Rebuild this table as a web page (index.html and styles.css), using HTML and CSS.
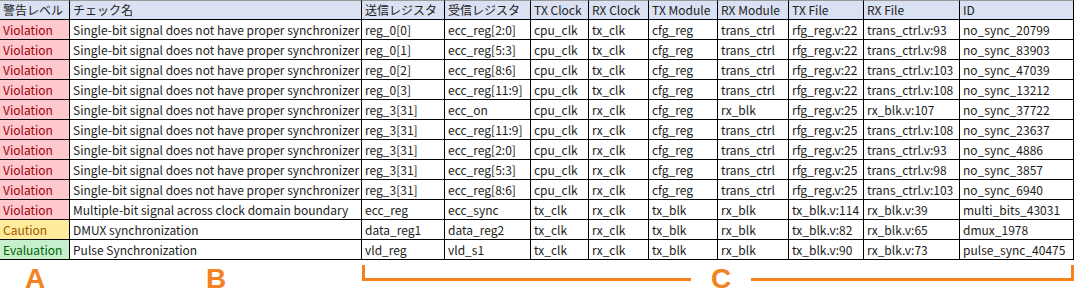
FILE: index.html
```html
<!DOCTYPE html>
<html lang="ja">
<head>
<meta charset="utf-8">
<title>CDC Report</title>
<link rel="stylesheet" href="styles.css">
</head>
<body>
<table class="report">
  <colgroup>
    <col class="c1"><col class="c2"><col class="c3"><col class="c4"><col class="c5"><col class="c6"><col class="c7"><col class="c8"><col class="c9"><col class="c10"><col class="c11">
  </colgroup>
  <thead>
    <tr><th>警告レベル</th><th>チェック名</th><th>送信レジスタ</th><th>受信レジスタ</th><th>TX Clock</th><th>RX Clock</th><th>TX Module</th><th>RX Module</th><th>TX File</th><th>RX File</th><th>ID</th></tr>
  </thead>
  <tbody>
    <tr><td class="lv violation">Violation</td><td>Single-bit signal does not have proper synchronizer</td><td>reg_0[0]</td><td>ecc_reg[2:0]</td><td>cpu_clk</td><td>tx_clk</td><td>cfg_reg</td><td>trans_ctrl</td><td>rfg_reg.v:22</td><td>trans_ctrl.v:93</td><td>no_sync_20799</td></tr>
    <tr><td class="lv violation">Violation</td><td>Single-bit signal does not have proper synchronizer</td><td>reg_0[1]</td><td>ecc_reg[5:3]</td><td>cpu_clk</td><td>tx_clk</td><td>cfg_reg</td><td>trans_ctrl</td><td>rfg_reg.v:22</td><td>trans_ctrl.v:98</td><td>no_sync_83903</td></tr>
    <tr><td class="lv violation">Violation</td><td>Single-bit signal does not have proper synchronizer</td><td>reg_0[2]</td><td>ecc_reg[8:6]</td><td>cpu_clk</td><td>tx_clk</td><td>cfg_reg</td><td>trans_ctrl</td><td>rfg_reg.v:22</td><td>trans_ctrl.v:103</td><td>no_sync_47039</td></tr>
    <tr><td class="lv violation">Violation</td><td>Single-bit signal does not have proper synchronizer</td><td>reg_0[3]</td><td>ecc_reg[11:9]</td><td>cpu_clk</td><td>tx_clk</td><td>cfg_reg</td><td>trans_ctrl</td><td>rfg_reg.v:22</td><td>trans_ctrl.v:108</td><td>no_sync_13212</td></tr>
    <tr><td class="lv violation">Violation</td><td>Single-bit signal does not have proper synchronizer</td><td>reg_3[31]</td><td>ecc_on</td><td>cpu_clk</td><td>rx_clk</td><td>cfg_reg</td><td>rx_blk</td><td>rfg_reg.v:25</td><td>rx_blk.v:107</td><td>no_sync_37722</td></tr>
    <tr><td class="lv violation">Violation</td><td>Single-bit signal does not have proper synchronizer</td><td>reg_3[31]</td><td>ecc_reg[11:9]</td><td>cpu_clk</td><td>rx_clk</td><td>cfg_reg</td><td>trans_ctrl</td><td>rfg_reg.v:25</td><td>trans_ctrl.v:108</td><td>no_sync_23637</td></tr>
    <tr><td class="lv violation">Violation</td><td>Single-bit signal does not have proper synchronizer</td><td>reg_3[31]</td><td>ecc_reg[2:0]</td><td>cpu_clk</td><td>rx_clk</td><td>cfg_reg</td><td>trans_ctrl</td><td>rfg_reg.v:25</td><td>trans_ctrl.v:93</td><td>no_sync_4886</td></tr>
    <tr><td class="lv violation">Violation</td><td>Single-bit signal does not have proper synchronizer</td><td>reg_3[31]</td><td>ecc_reg[5:3]</td><td>cpu_clk</td><td>rx_clk</td><td>cfg_reg</td><td>trans_ctrl</td><td>rfg_reg.v:25</td><td>trans_ctrl.v:98</td><td>no_sync_3857</td></tr>
    <tr><td class="lv violation">Violation</td><td>Single-bit signal does not have proper synchronizer</td><td>reg_3[31]</td><td>ecc_reg[8:6]</td><td>cpu_clk</td><td>rx_clk</td><td>cfg_reg</td><td>trans_ctrl</td><td>rfg_reg.v:25</td><td>trans_ctrl.v:103</td><td>no_sync_6940</td></tr>
    <tr><td class="lv violation">Violation</td><td>Multiple-bit signal across clock domain boundary</td><td>ecc_reg</td><td>ecc_sync</td><td>tx_clk</td><td>rx_clk</td><td>tx_blk</td><td>rx_blk</td><td>tx_blk.v:114</td><td>rx_blk.v:39</td><td>multi_bits_43031</td></tr>
    <tr><td class="lv caution">Caution</td><td>DMUX synchronization</td><td>data_reg1</td><td>data_reg2</td><td>tx_clk</td><td>rx_clk</td><td>tx_blk</td><td>rx_blk</td><td>tx_blk.v:82</td><td>rx_blk.v:65</td><td>dmux_1978</td></tr>
    <tr><td class="lv evaluation">Evaluation</td><td>Pulse Synchronization</td><td>vld_reg</td><td>vld_s1</td><td>tx_clk</td><td>rx_clk</td><td>tx_blk</td><td>rx_blk</td><td>tx_blk.v:90</td><td>rx_blk.v:73</td><td>pulse_sync_40475</td></tr>
  </tbody>
</table>
<div class="legend">
  <div class="mark">A</div>
  <div class="mark">B</div>
  <div class="bracket">
    <div class="arm arm-left"></div>
    <div class="mark mark-c">C</div>
    <div class="arm arm-right"></div>
  </div>
</div>
</body>
</html>
```
FILE: styles.css
```css
html, body {
  margin: 0;
  padding: 0;
  background: #ffffff;
}
body {
  width: 1075px;
  height: 293px;
  overflow: hidden;
  font-family: "Noto Sans CJK JP", "Noto Sans", sans-serif;
}
.report {
  border-collapse: separate;
  border-spacing: 0;
  table-layout: fixed;
  width: 1074px;
  font-size: 12px;
  color: #1c1c1c;
}
.c1 { width: 70px; }
.c2 { width: 292px; }
.c3 { width: 83px; }
.c4 { width: 86px; }
.c5 { width: 58px; }
.c6 { width: 60px; }
.c7 { width: 69px; }
.c8 { width: 71px; }
.c9 { width: 75px; }
.c10 { width: 96px; }
.c11 { width: 114px; }
.report th,
.report td {
  box-sizing: border-box;
  padding: 0 0 0 3px;
  height: 20px;
  line-height: 19px;
  border-right: 1px solid #000;
  border-bottom: 1px solid #000;
  text-align: left;
  white-space: nowrap;
  overflow: hidden;
  font-weight: normal;
  vertical-align: middle;
}
.report th {
  background: #d9e1f2;
  border-top: 1px solid #9a9a9a;
  line-height: 18px;
  color: #222;
}
.lv.violation { background: #ffc7ce; color: #9c0006; }
.lv.caution { background: #ffeb9c; color: #9c5700; }
.lv.evaluation { background: #c6efce; color: #006100; }

.legend {
  display: grid;
  grid-template-columns: 70px 292px 712px;
  margin-top: 5px;
}
.mark {
  color: #f58220;
  font-family: "Liberation Sans", Arial, sans-serif;
  font-weight: bold;
  font-size: 28px;
  line-height: 26px;
  text-align: center;
  padding-top: 1px;
}
.bracket {
  display: flex;
  align-items: flex-start;
}
.arm {
  height: 13px;
  border-bottom: 3px solid #f58220;
}
.arm-left {
  width: 326px;
  border-left: 3px solid #f58220;
}
.arm-right {
  flex: 1;
  border-right: 3px solid #f58220;
}
.mark-c {
  width: 60px;
}
```
